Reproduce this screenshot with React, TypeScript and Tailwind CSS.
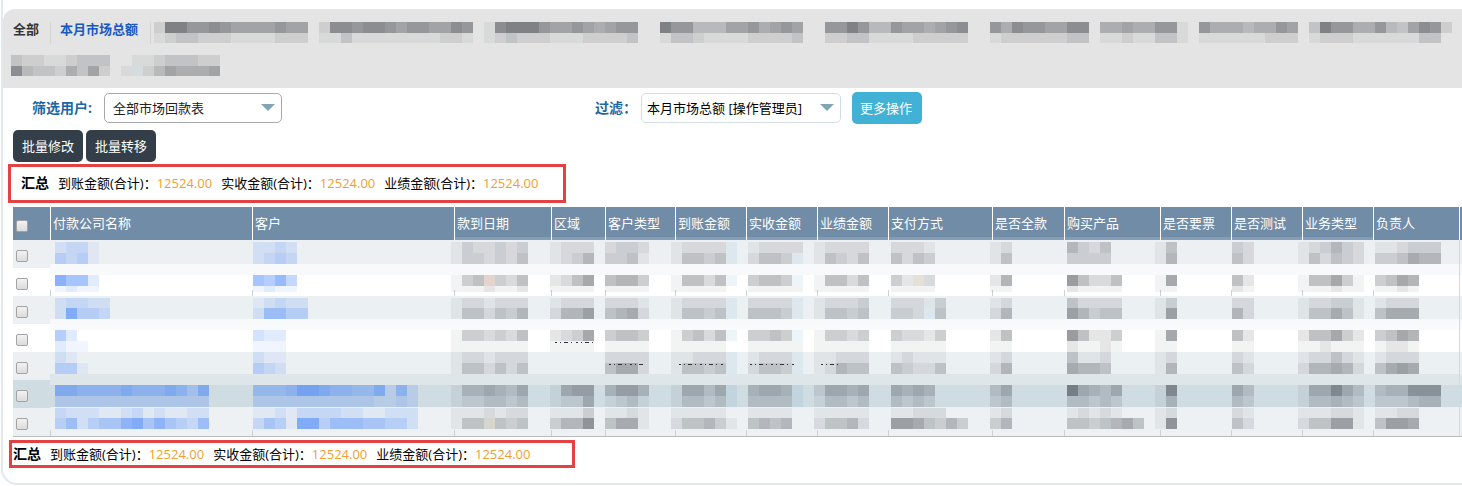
import React from "react";

const CELL = 11;

// Digits are grey levels, a-i are blue levels, p/y/s are soft tints, "." is empty.
function tone(ch: string): string {
  if (ch >= "0" && ch <= "9") return `rgba(24,30,36,${Number(ch) * 0.055})`;
  if (ch >= "a" && ch <= "i") return `rgba(50,120,250,${(ch.charCodeAt(0) - 96) * 0.072})`;
  if (ch === "p") return "rgba(170,110,90,0.3)";
  if (ch === "y") return "rgba(150,135,90,0.25)";
  if (ch === "s") return "rgba(90,160,200,0.1)";
  return "none";
}

type Band = { y: number; h: number; cells: string };

function Mosaic({
  bands,
  height,
  shift = 0,
  tick = false,
  dash = 0,
}: {
  bands: Band[];
  height: number;
  shift?: number;
  tick?: boolean;
  dash?: number;
}) {
  const cols = Math.max(1, ...bands.map((b) => b.cells.length));
  return (
    <svg
      aria-hidden="true"
      className="block overflow-visible"
      width={cols * CELL}
      height={height}
      shapeRendering="crispEdges"
    >
      {tick && <rect x={0} y={height - 6} width={1} height={6} fill="#cfd2d4" />}
      {bands.map((b) =>
        b.cells
          .split("")
          .map((ch, i) =>
            ch === "." ? null : (
              <rect
                key={`${b.y}-${i}`}
                x={shift + i * CELL}
                y={b.y}
                width={CELL}
                height={b.h}
                fill={tone(ch)}
              />
            )
          )
      )}
      {dash > 0 && (
        <line
          x1={4}
          x2={dash}
          y1={bands[1].y + 1}
          y2={bands[1].y + 1}
          stroke="#333"
          strokeWidth={1}
          strokeDasharray="2 3 1 3 4 3 1 4"
        />
      )}
    </svg>
  );
}

const hiddenTabs: [string, string][] = [
  ["29977876666766", "12332221111222"],
  ["28878876776687", "11311111111221"],
  ["18999766765677", "12322211122223"],
  [".9774446675676", ".1332111122223"],
  [".7797447665678", ".2233111122222"],
  [".758776688", ".122222233"],
  ["55655771", "11211331"],
  ["755545576", "111111222"],
  ["3977557436872", "122211111133."],
  ["322112333", "843325362"],
  [".11233322", "1s2465556"],
];

type Column = {
  name: string;
  width: string;
  shift: number;
  rows: [string, string][];
  dashRow?: number;
  dash?: number;
};

const columns: Column[] = [
  {
    name: "付款公司名称", width: "w-[202px]", shift: 5,
    rows: [["bcca", "dcda"], ["hffb", "abaa"], ["bccbb", "bhddc"], ["eb", "baa"], ["ba.", "dda"],
      ["ggffffgfffgfdg", "cccccccccccccc"], ["cbbbaabcabaabb", "dfbdeeghegedcf"]],
  },
  {
    name: "客户", width: "w-[202px]", shift: 1,
    rows: [["bbcb", "bcdc"], ["fegd", "abaa"], ["abcbb", "bffdd"], ["cbb", "aaa"], ["baa", "dcb"],
      ["eeefhhgffeegbfb", "cccccccccccbbcb"], ["aabaccccbbaabbb", "cedahhdfffeeddb"]],
  },
  {
    name: "款到日期", width: "w-[97px]", shift: -3,
    rows: [["1322323", "1332324"], ["145p435", "1112112"], ["1221222", "1442435"], ["1443435", "1111111"], ["1221222", "1442424"],
      ["1445435", "1223323"], ["1112122", "144y434"]],
  },
  {
    name: "区域", width: "w-[54px]", shift: -1, dashRow: 3, dash: 42,
    rows: [["1222", "1235"], ["2357", "1111"], ["1222", "2557"], ["2347", "1111"], ["....", "...."],
      ["1566", "1225"], ["1113", "3558"]],
  },
  {
    name: "客户类型", width: "w-[70px]", shift: 0, dashRow: 4, dash: 40,
    rows: [["2332", "3341"], ["5664", "1111"], ["2221", "4562"], ["4554", "1111"], ["2222", "4662"],
      ["4664", "1231"], ["1121", "4661"]],
  },
  {
    name: "到账金额", width: "w-[71px]", shift: -4, dashRow: 4, dash: 50,
    rows: [["12222s", "14434s"], ["15535s", "11111."], ["12222s", "14434s"], ["14535s", "11111."], ["11222s", "14434s"],
      ["15535s", "13323s"], ["11111.", "244531"]],
  },
  {
    name: "实收金额", width: "w-[71px]", shift: 2, dashRow: 4, dash: 50,
    rows: [["12222", "2443s"], ["4554s", "11111"], ["2222s", "4443s"], ["4454s", "11111"], ["1222s", "2443s"],
      ["4554s", "3333s"], ["1111.", "4545"]],
  },
  {
    name: "业绩金额", width: "w-[71px]", shift: -3, dashRow: 4, dash: 25,
    rows: [["12222", "14324"], ["15535", "11111"], ["12223", "14434"], ["14434", "11111"], ["11222", "12544"],
      ["25545", "13323"], ["11111", "24452"]],
  },
  {
    name: "支付方式", width: "w-[104px]", shift: 3,
    rows: [["2221", "4243"], ["42y3", "1111"], ["22213", "332s4"], ["43324", "11111"], ["12111", "43224"],
      ["5454", "3232"], ["11222", "7764353"]],
  },
  {
    name: "是否全款", width: "w-[72px]", shift: -2,
    rows: [["12", "14"], ["26", "11"], ["12", "25"], ["25", "11"], ["12", "25"], ["35", "23"], ["12", "35"]],
  },
  {
    name: "购买产品", width: "w-[96px]", shift: 3,
    rows: [["5324", "3333"], ["85335", "21111"], ["42222", "75344"], ["85224", "21121"], ["4112", "6554"],
      ["95435", "33232"], ["12121", "4434564"]],
  },
  {
    name: "是否要票", width: "w-[71px]", shift: -5,
    rows: [["14", "15"], ["17", "11"], ["13", "17"], ["17", "11"], ["12", "15"], ["18", "14"], ["12", "18"]],
  },
  {
    name: "是否测试", width: "w-[71px]", shift: 1,
    rows: [["32", "42"], ["52", "21"], ["22", "52"], ["52", "11"], ["21", "42"], ["53", "32"], ["21", "42"]],
  },
  {
    name: "业务类型", width: "w-[71px]", shift: -4,
    rows: [["123532", "142432"], ["155741", "111211"], ["122331", "144641"], ["255742", "112111"], ["122421", "255652"],
      ["155853", "133432"], ["111221", "244771"]],
  },
  {
    name: "负责人", width: "w-[86px]", shift: 2,
    rows: [["112333", "334655"], ["4576", "1121"], ["1222", "4666"], ["4576", "1221"], ["1222", "4676"],
      ["344777", "222344"], ["1122", "4776"]],
  },
];

const rowBands: [number, number, number, number][] = [
  [2, 11, 13, 11],
  [7, 11, 18, 6],
  [2, 10, 12, 11],
  [6, 11, 17, 11],
  [0, 11, 11, 11],
  [5, 11, 16, 11],
  [0, 10, 10, 11],
];

const rowLead = ["bg-[#edf0f3]", "bg-white", "bg-[#edf0f3]", "bg-white", "bg-[#edf0f3]", "bg-[#cfdce2]", "bg-[#edf0f3]"];

const rowFill = [
  "bg-[linear-gradient(#edf0f3_24px,#f8f9fa_24px)]",
  "bg-[linear-gradient(#f8f9fa_7px,#ffffff_7px)]",
  "bg-[linear-gradient(#ebf0f3_23px,#f7f9fa_23px)]",
  "bg-[linear-gradient(#f8fafb_6px,#ffffff_6px)]",
  "bg-[linear-gradient(#ebf0f3_22px,#dfe6e9_22px)]",
  "bg-[linear-gradient(#dfe6e9_5px,#cfdce2_5px,#cfdce2_27px,#ebf0f4_27px)]",
  "bg-[#edf1f4]",
];

function Arrow() {
  return (
    <svg
      aria-hidden="true"
      className="pointer-events-none absolute right-[7px] top-[11px]"
      width="14"
      height="7"
      viewBox="0 0 14 7"
    >
      <path d="M0 0h14L7 7z" fill="#80a5b5" />
    </svg>
  );
}

function Check({ label }: { label: string }) {
  return (
    <input
      type="checkbox"
      aria-label={label}
      className="mt-1 ml-[3px] block size-3 appearance-none rounded-xs border border-[#a3a3a3] bg-linear-to-b from-[#f2f2f2] to-[#dcdcdc] checked:bg-[#6f8ba5] checked:bg-none"
    />
  );
}

const totals = ["到账金额", "实收金额", "业绩金额"];

function Summary() {
  return (
    <>
      <strong className="text-sm leading-5">汇总</strong>
      {totals.map((t) => (
        <span key={t} className="whitespace-nowrap">
          {t}(合计)：<span className="text-[#f0a02f]">12524.00</span>
        </span>
      ))}
    </>
  );
}

export default function App() {
  return (
    <main className="ml-px overflow-hidden rounded-bl-2xl border-b-2 border-l-2 border-[#e2e8ed] bg-white pt-[9px] pb-[15px] font-['Open_Sans','Noto_Sans_CJK_SC',sans-serif] text-[13px] leading-5 text-black">
      <nav className="overflow-hidden rounded-tl-xl bg-[#e4e4e4] pt-[13px] pb-[11px] pl-2">
        <ul className="-mr-2 flex flex-wrap items-start gap-y-[11px]">
          <li className="mr-[11px] pl-0.5 leading-[14px]">
            <a href="#all" className="font-bold text-[#333]">全部</a>
          </li>
          <li className="mr-[3px] border-x border-[#d5d6d0] pr-3 pb-2 pl-[9px] leading-[14px]">
            <a href="#month" className="font-bold text-[#1a58c4]">本月市场总额</a>
          </li>
          {hiddenTabs.map(([top, bottom], i) => (
            <li key={i} className="mr-[11px]">
              <Mosaic height={22} bands={[{ y: 0, h: 11, cells: top }, { y: 11, h: 10, cells: bottom }]} />
            </li>
          ))}
        </ul>
      </nav>

      <form className="flex items-center pt-1 pl-[29px]">
        <div className="flex w-[563px] items-center gap-3">
          <label htmlFor="user" className="text-sm font-bold text-[#1c67a3]">筛选用户:</label>
          <div className="relative">
            <select id="user" className="block h-[30px] w-[178px] appearance-none rounded-[5px] border border-[#a5a9ad] bg-white pl-2 text-[#222]">
              <option>全部市场回款表</option>
            </select>
            <Arrow />
          </div>
        </div>
        <label htmlFor="filter" className="w-[46px] whitespace-nowrap text-sm font-bold text-[#1c67a3]">过滤：</label>
        <div className="relative">
          <select id="filter" className="block h-[30px] w-[200px] appearance-none rounded-[5px] border border-[#d3dee4] bg-white pl-[5px] text-black">
            <option>本月市场总额 [操作管理员]</option>
          </select>
          <Arrow />
        </div>
        <button type="button" className="ml-[11px] h-8 w-[70px] rounded-[5px] bg-[#41b2d6] pr-0.5 text-white">更多操作</button>
      </form>

      <div className="mt-1.5 flex gap-[3px] pl-2.5">
        <button type="button" className="h-8 w-[70px] rounded-[5px] bg-[#333e48] text-white">批量修改</button>
        <button type="button" className="h-8 w-[70px] rounded-[5px] bg-[#333e48] text-white">批量转移</button>
      </div>

      <section className="mt-0.5 ml-[5px] flex h-[39px] w-[558px] items-center gap-[9px] border-3 border-[#e34240] pb-0.5 pl-2.5">
        <Summary />
      </section>

      <div className="mt-1 pl-2.5">
        <table className="w-full table-fixed border-collapse border-b border-[#b9bcbe]">
          <colgroup>
            <col className="w-[37px]" />
            {columns.map((c) => (
              <col key={c.name} className={c.width} />
            ))}
            <col />
          </colgroup>
          <thead>
            <tr className="h-[33px] bg-[#708ca7] text-left text-white">
              <th className="p-0"><Check label="全选" /></th>
              {columns.map((c, i) => (
                <th
                  key={c.name}
                  className={`p-0 font-normal whitespace-nowrap ${i > 1 && i < 14 ? "bg-[linear-gradient(#708ca7_30px,#859db5_30px)]" : ""}`}
                >
                  <div className="h-[33px] border-l border-white pl-0.5 leading-8">{c.name}</div>
                </th>
              ))}
              <th className="p-0"><div className="h-[33px] border-l border-white" /></th>
            </tr>
          </thead>
          <tbody>
            {rowBands.map(([y1, h1, y2, h2], r) => (
              <tr key={r} className="h-7">
                <td className={`p-0 ${rowLead[r]}`}><Check label={`选择第${r + 1}行`} /></td>
                {columns.map((c) => (
                  <td key={c.name} className={`p-0 align-top ${rowFill[r]}`}>
                    <Mosaic
                      height={28}
                      shift={c.shift}
                      tick={r === 1 || r === 6}
                      dash={c.dashRow === r ? c.dash : 0}
                      bands={[
                        { y: y1, h: h1, cells: c.rows[r][0] },
                        { y: y2, h: h2, cells: c.rows[r][1] },
                      ]}
                    />
                  </td>
                ))}
                <td className={`p-0 ${rowFill[r]}`}><div className="h-7 border-l border-[#d5d9dc]" /></td>
              </tr>
            ))}
          </tbody>
        </table>
      </div>

      <section className="mt-[3px] ml-1.5 flex h-7 w-[566px] items-center gap-[9px] border-3 border-[#e34240] pl-px">
        <Summary />
      </section>
    </main>
  );
}
